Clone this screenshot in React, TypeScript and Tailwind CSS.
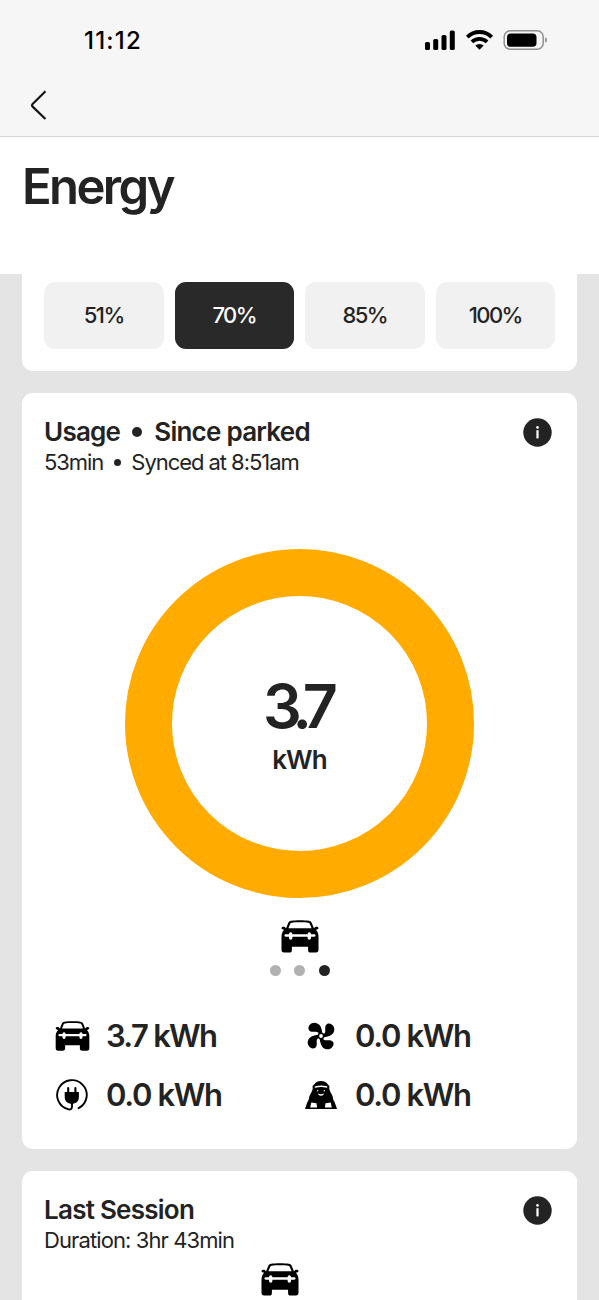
import clsx from 'clsx'

const CHARGE_LIMITS = [
  { label: '51%', active: false },
  { label: '70%', active: true },
  { label: '85%', active: false },
  { label: '100%', active: false },
]

function StatusBar() {
  return (
    <div className="flex h-[82px] items-center justify-between pr-[52px] pl-[84px]">
      <span className="text-[24px] leading-none font-medium tracking-[1.2px] text-black">11:12</span>
      <div className="flex translate-x-[0.5px] items-center pb-[2px]">
        {/* Cellular */}
        <svg width="32" height="20" viewBox="0 0 32 20" fill="#000">
          <rect x="0.5" y="12" width="5" height="8" rx="1.6" />
          <rect x="8.7" y="9" width="5" height="11" rx="1.6" />
          <rect x="17" y="5" width="5" height="15" rx="1.6" />
          <rect x="25.3" y="0.5" width="5" height="19.5" rx="1.6" />
        </svg>
        {/* Wifi */}
        <svg className="ml-[9px]" width="28" height="20" viewBox="0 0 28 20" fill="none" stroke="#000">
          <path d="M1.8 7.1a17.4 17.4 0 0 1 24.4 0" strokeWidth="4" />
          <path d="M6.4 11.9a11 11 0 0 1 15.2 0" strokeWidth="3.7" />
          <path d="M9.8 15.6a6 6 0 0 1 8.4 0L14 19.8z" fill="#000" stroke="none" />
        </svg>
        {/* Battery */}
        <svg className="ml-[9px]" width="45" height="20" viewBox="0 0 45 20">
          <rect x="1.7" y="0.8" width="39" height="18.4" rx="6" fill="none" stroke="#909090" strokeWidth="1.5" />
          <rect x="4.5" y="3.4" width="29.5" height="13.4" rx="3.8" fill="#000" />
          <path d="M42.6 7.2c1.2.4 1.9 1.5 1.9 2.8s-.7 2.4-1.9 2.8z" fill="#909090" />
        </svg>
      </div>
    </div>
  )
}

function CarIcon({ className }: { className?: string }) {
  return (
    <svg className={className} viewBox="0 0 38 33">
      <path
        d="M10.2.8C14 .1 24 .1 27.8.8c1.6.2 2.6 1 3.1 2.4l2 5 1.4-1.3c.5-.5 3.2-.2 3.2 1.2 0 1-1.2 1.6-2.7 1.7 1.7 1.7 2.7 3.8 2.7 6.6v13.2c0 1.9-.8 3-2.6 3h-5.2c-1.9 0-2.6-1-2.6-2.7v-3.1H10.9v3.1c0 1.7-.7 2.7-2.6 2.7H3.1c-1.8 0-2.6-1.1-2.6-3V16.4c0-2.8 1-4.9 2.7-6.6C1.7 9.7.5 9.1.5 8.1c0-1.4 2.7-1.7 3.2-1.2l1.4 1.3 2-5C7.6 1.8 8.6 1 10.2.8z"
        fill="#000"
      />
      <path d="M10.8 2.7c3.4-.5 13-.5 16.4 0 .9.1 1.4.5 1.7 1.3l1.7 4.3H7.4L9.1 4c.3-.8.8-1.2 1.7-1.3z" fill="#fff" />
      <path d="M4.6 15.5h28.8" stroke="#fff" strokeWidth="2.3" strokeLinecap="round" />
      <path d="M9.7 14v4M28.3 14v4" stroke="#fff" strokeWidth="3.4" strokeLinecap="round" />
    </svg>
  )
}

function FanIcon() {
  return (
    <svg width="28" height="28" viewBox="0 0 28 28">
      <g fill="#000">
        {[0, 90, 180, 270].map((angle) => (
          <path
            key={angle}
            d="M15.2 12.3c.1-3-.7-6.6-2.6-9.2C10.8.9 7.6 0 4.9 1.2 2 2.5.7 5.7 1.9 7.9c1.1 1.9 3.3 2 5.8 1.8 2.5-.3 4.1.5 4.9 2.8z"
            transform={`rotate(${angle} 14 14)`}
          />
        ))}
        <circle cx="14" cy="14" r="3.4" />
      </g>
      <circle cx="14" cy="14" r="1.9" fill="#fff" />
    </svg>
  )
}

function PlugIcon() {
  return (
    <svg width="32" height="32" viewBox="0 0 32 32" fill="none" stroke="#000">
      <path d="M22.6 29.2A14.8 14.8 0 1 0 12.6 30.4c2 .4 3.4-.6 3.4-2.6V23" strokeWidth="1.9" strokeLinecap="round" />
      <path d="M12.2 9v6M19.4 9v6" strokeWidth="2.1" strokeLinecap="round" />
      <path d="M8.7 13h14.2v5.2c0 3.4-2 5.6-5 6.4l-2.1.6-2.1-.6c-3-.8-5-3-5-6.4z" fill="#000" stroke="none" />
    </svg>
  )
}

function GuardIcon() {
  return (
    <svg width="32" height="28" viewBox="0 0 32 28">
      <path
        d="M16 0c3.3 0 5.9 1.4 7.1 3.8 1.6.7 1.6 2 1.1 3.2.3 2.4 1.2 4 2.5 6.2 1 1.7 1.1 2.8 1.3 4.2.3 1.4 1 2.4 1.8 4.1L32 28H0l2.2-6.5C3 19.8 3.7 18.8 4 17.4c.2-1.4.3-2.5 1.3-4.2 1.3-2.2 2.2-3.8 2.5-6.2-.5-1.2-.5-2.5 1.1-3.2C10.1 1.4 12.7 0 16 0z"
        fill="#000"
      />
      <path d="M10.4 5.9c3.7-.7 7.5-.7 11.2 0" fill="none" stroke="#fff" strokeWidth="1.5" strokeLinecap="round" />
      <path d="M13 12.6c.4 3 5.6 3 6 0-1.9.8-4.1.8-6 0z" fill="#fff" />
      <circle cx="12.7" cy="9.7" r="0.7" fill="#fff" />
      <circle cx="19.3" cy="9.7" r="0.7" fill="#fff" />
      <path d="M6.3 21.6l5.2.6.6 4.2H5.2zM25.7 21.6l-5.2.6-.6 4.2h6.9z" fill="#fff" />
    </svg>
  )
}

function InfoIcon() {
  return (
    <svg className="mt-[2px] shrink-0" width="29" height="29" viewBox="0 0 29 29">
      <circle cx="14.5" cy="14.5" r="14.2" fill="#232323" />
      <circle cx="14.5" cy="9.4" r="1.3" fill="#fff" />
      <path d="M14.5 12.2v8.2" stroke="#fff" strokeWidth="2.2" />
    </svg>
  )
}

function Dot({ className }: { className?: string }) {
  return <span className={clsx('inline-block rounded-full bg-[#232323]', className)} />
}

export default function App() {
  return (
    <div className="flex h-[1300px] w-full flex-col overflow-hidden bg-[#e4e4e4] font-[Inter,'Liberation_Sans',sans-serif] text-[#232323]">
      <header className="h-[137px] shrink-0 border-b border-[#d4d4d4] bg-[#f6f6f6]">
        <StatusBar />
        <button className="mt-[8px] ml-[30px] block" aria-label="Back">
          <svg width="17" height="30" viewBox="0 0 17 30" fill="none" stroke="#161616" strokeWidth="2.2">
            <path d="M15.5 1.2L2.6 14a1.8 1.8 0 0 0 0 2.6L15.5 29" />
          </svg>
        </button>
      </header>

      <div className="h-[137px] shrink-0 bg-white pt-[20px] pl-[22px]">
        <h1 className="text-[49px] leading-[60px] font-semibold tracking-[-2.6px]">Energy</h1>
      </div>

      <main className="flex flex-col gap-[22px] px-[22px]">
        {/* Charge limit */}
        <section className="flex h-[97px] gap-[11px] rounded-b-[11px] bg-white px-[22px] pt-[8px]">
          {CHARGE_LIMITS.map((limit) => (
            <button
              key={limit.label}
              className={clsx(
                'h-[67px] flex-1 rounded-[11px] text-[22px] font-medium tracking-[-1.6px]',
                limit.active ? 'bg-[#292929] text-white' : 'bg-[#f1f1f1]'
              )}
            >
              {limit.label}
            </button>
          ))}
        </section>

        {/* Usage */}
        <section className="flex h-[756px] flex-col rounded-[11px] bg-white px-[22px] pt-[23px]">
          <div className="flex justify-between pr-[3px]">
            <div>
              <h2 className="flex items-center text-[26px] leading-[32px] font-semibold tracking-[-0.75px]">
                Usage <Dot className="mx-[12px] size-[10px]" /> Since parked
              </h2>
              <p className="flex items-center text-[22px] leading-[28px] tracking-[-1.05px]">
                53min <Dot className="mr-[10px] ml-[11px] size-[7px]" /> Synced at 8:51am
              </p>
            </div>
            <InfoIcon />
          </div>

          <div className="mt-[73px] flex size-[349px] flex-col items-center self-center rounded-full border-[47.5px] border-[#ffab00] pt-[80px]">
            <span className="-ml-[6px] text-[61px] leading-[60px] font-semibold tracking-[-8px]">3.7</span>
            <span className="mt-[8px] text-[26px] leading-[32px] font-semibold tracking-[-0.9px]">kWh</span>
          </div>

          <CarIcon className="mt-[22px] h-[33px] w-[38px] self-center" />
          <div className="mt-[12px] flex justify-center gap-[13.5px]">
            <span className="size-[11px] rounded-full bg-[#b1b1b1]" />
            <span className="size-[11px] rounded-full bg-[#b1b1b1]" />
            <span className="size-[11px] rounded-full bg-[#232323]" />
          </div>

          <div className="mt-[40px] grid grid-cols-[249px_1fr] gap-y-[19px] pl-[10px] text-[31px] leading-[40px] font-semibold tracking-[-1.35px]">
            <div className="flex items-center tracking-[-1.7px]">
              <span className="flex w-[52px] pl-[1px]"><CarIcon className="h-[30px] w-[35px]" /></span>
              3.7 kWh
            </div>
            <div className="flex items-center">
              <span className="flex w-[52px] pl-[4px]"><FanIcon /></span>
              0.0 kWh
            </div>
            <div className="flex items-center">
              <span className="flex w-[52px] pl-[2px]"><PlugIcon /></span>
              0.0 kWh
            </div>
            <div className="flex items-center">
              <span className="flex w-[52px] pl-[2px]"><GuardIcon /></span>
              0.0 kWh
            </div>
          </div>
        </section>

        {/* Last session */}
        <section className="flex h-[160px] flex-col rounded-t-[11px] bg-white px-[22px] pt-[23px]">
          <div className="flex justify-between pr-[3px]">
            <div>
              <h2 className="text-[26px] leading-[32px] font-semibold tracking-[-0.75px]">Last Session</h2>
              <p className="text-[22px] leading-[28px] tracking-[-0.9px]">Duration: 3hr 43min</p>
            </div>
            <InfoIcon />
          </div>
          <CarIcon className="mt-[9px] ml-[217px] h-[33px] w-[38px]" />
        </section>
      </main>
    </div>
  )
}
